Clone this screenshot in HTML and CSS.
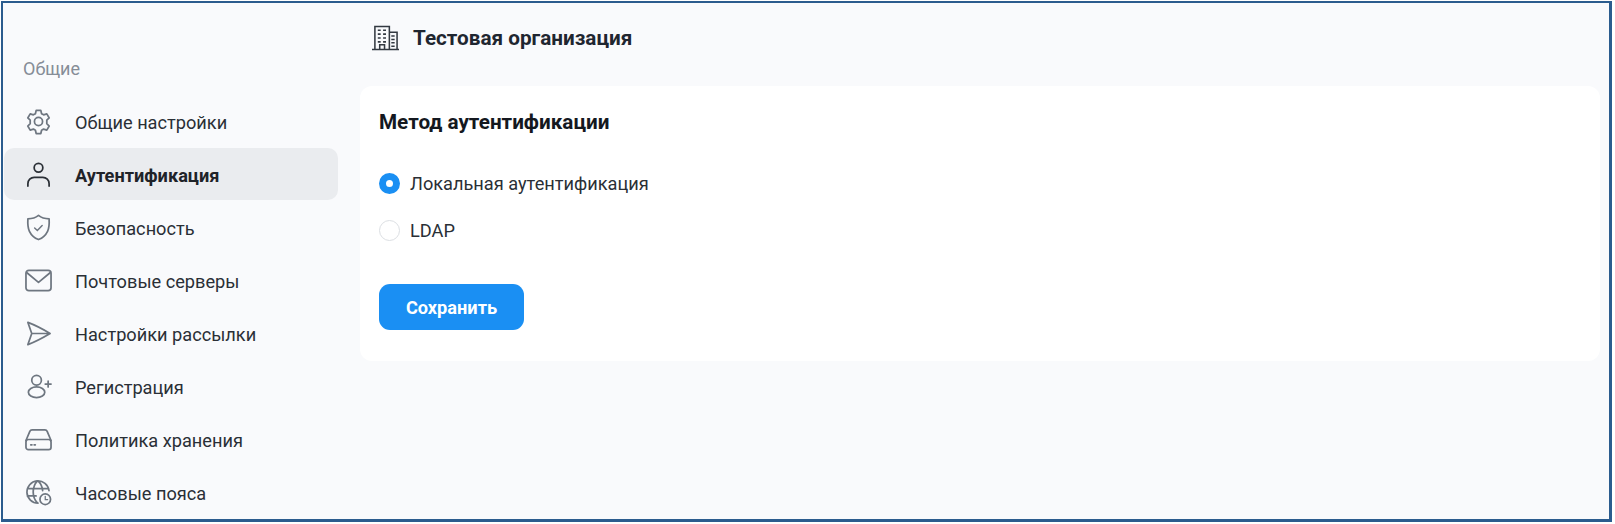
FILE: index.html
```html
<!DOCTYPE html>
<html lang="ru">
<head>
<meta charset="utf-8">
<title>Аутентификация</title>
<link rel="stylesheet" href="styles.css">
</head>
<body>
<div class="frame">
  <aside class="sidebar">
    <div class="group-label">Общие</div>
    <nav class="menu">
      <a class="item"><svg class="icon" viewBox="0 0 28 28"><path d="M11.6 2.500h4.800l.8 3.400 2.100 1.200 3.300-1 2.500 4.200-2.500 2.400v3.600l2.500 2.400-2.500 4.200-3.300-1-2.100 1.200-.8 3.400h-4.800l-.8-3.400-2.100-1.200-3.300 1-2.500-4.200 2.500-2.400v-3.600l-2.500-2.400 2.500-4.200 3.300 1 2.100-1.200z" stroke-linejoin="round"/><circle cx="14" cy="14" r="4.200"/></svg><span>Общие настройки</span></a>
      <a class="item active"><svg class="icon" viewBox="0 0 28 28"><circle cx="14" cy="7" r="4.500"/><path d="M3 26v-2.500a6.500 6.500 0 0 1 6.500-6.500h9a6.500 6.500 0 0 1 6.500 6.500V26"/></svg><span>Аутентификация</span></a>
      <a class="item"><svg class="icon" viewBox="0 0 28 28"><path d="M14 1.500c2.800 2.300 6.700 3.500 11 3.500.3 5 .3 9-1.600 13-1.800 3.800-5 6.800-9.400 8.500-4.400-1.700-7.600-4.700-9.400-8.500C2.700 14 2.700 10 3 5 7.300 5 11.200 3.800 14 1.500z" stroke-linejoin="round"/><path d="M10 14.500l2.800 2.700 5-5.200" stroke-width="1.500"/></svg><span>Безопасность</span></a>
      <a class="item"><svg class="icon" viewBox="0 0 28 28"><rect x="1" y="3.500" width="26" height="21" rx="3"/><path d="M2 6l12 10 12-10" stroke-linejoin="round"/></svg><span>Почтовые серверы</span></a>
      <a class="item"><svg class="icon" viewBox="0 0 28 28"><path d="M3 2.500c8 3 15.500 7 23 11.500-7.500 4.500-15 8.500-23 11.500L7 14zM7 14h19" stroke-linejoin="round"/></svg><span>Настройки рассылки</span></a>
      <a class="item"><svg class="icon" viewBox="0 0 28 28"><circle cx="12" cy="7.500" r="5"/><ellipse cx="12" cy="20" rx="8.500" ry="5.500"/><path d="M21 11.500h6M24 8.500v6"/></svg><span>Регистрация</span></a>
      <a class="item"><svg class="icon" viewBox="0 0 28 28"><path d="M1 15l4-9.500a2.500 2.500 0 0 1 2.300-1.500h13.400A2.500 2.500 0 0 1 23 5.500L27 15" stroke-linejoin="round"/><rect x="1" y="14" width="26" height="10.500" rx="2.500"/><path d="M6 19.500h1.200M9.500 19.500h1.200"/></svg><span>Политика хранения</span></a>
      <a class="item"><svg class="icon" viewBox="0 0 28 28"><path d="M13.500 25a11.500 11.500 0 1 1 11.400-13M2.500 10h22M2.500 17.500h9M13 2c-6 6-6 17 0 23M13.500 2c3 3 4.500 6.500 4.800 10"/><circle cx="21" cy="21" r="5.500"/><path d="M21 18v3.300h2.500" stroke-width="1.300"/></svg><span>Часовые пояса</span></a>
    </nav>
  </aside>
  <main class="content">
    <header class="org">
      <svg class="org-icon" viewBox="0 0 28 26"><path d="M0 25h28M3 25V1h15v24M18 7h8v18M8 25v-5h5v5M6 5h3M11.500 5h3M6 9h3M11.500 9h3M6 13h3M11.500 13h3M6 17h3M11.500 17h3M20 11h3.500M20 14.500h3.500M20 18h3.500M20 21.500h3.500"/></svg>
      <h1 class="org-name">Тестовая организация</h1>
    </header>
    <section class="card">
      <h2 class="card-title">Метод аутентификации</h2>
      <div class="radios">
        <label class="radio"><span class="dot checked"></span><span>Локальная аутентификация</span></label>
        <label class="radio"><span class="dot"></span><span>LDAP</span></label>
      </div>
      <button class="save">Сохранить</button>
    </section>
  </main>
</div>
</body>
</html>
```
FILE: styles.css
```css
* { box-sizing: border-box; }
html, body { margin: 0; height: 100%; background: #fff; }
body { padding: 1px 3px 2px 1px; font-family: Roboto, "Liberation Sans", sans-serif; color: #1f2329; overflow: hidden; }
.frame { display: flex; height: 521px; border: solid #2b5c8e; border-width: 2px 3px 3px 2px; background: #f9fafc; overflow: hidden; }
.sidebar { width: 336px; flex: none; padding: 54px 0 0 1px; }
.group-label { margin-left: 19px; font-size: 18px; line-height: 24px; color: #868d97; }
.menu { display: flex; flex-direction: column; margin-top: 14px; gap: 1px; }
.item { display: flex; align-items: center; height: 52px; width: 334px; border-radius: 10px; padding-left: 21px; font-size: 18.200px; color: #2a2f36; }
.item span { margin-left: 23px; position: relative; top: 1px; }
.item.active { background: #eaecef; font-weight: 700; color: #1f2329; }
.icon { width: 27px; height: 27px; flex: none; fill: none; stroke: #6e7680; stroke-width: 1.800; stroke-linecap: round; }
.active .icon { stroke: #2a2f36; }
.content { flex: 1; padding: 0 9px 0 21px; }
.org { display: flex; align-items: center; height: 83px; padding: 0 0 14px 12px; gap: 14px; }
.org-icon { width: 27px; height: 26px; fill: none; stroke: #333941; stroke-width: 1.600; }
.org-name { margin: 0; font-size: 20.700px; font-weight: 700; color: #1f2630; }
.card { background: #fff; border-radius: 12px; height: 275px; padding: 22px 19px; }
.card-title { margin: 0; font-size: 20.700px; line-height: 28px; font-weight: 700; color: #14181f; }
.radios { display: flex; flex-direction: column; gap: 21px; margin-top: 34px; }
.radio { display: flex; align-items: center; gap: 10px; height: 26px; font-size: 18.200px; color: #2a2f36; }
.dot { width: 21px; height: 21px; border-radius: 50%; border: 1.500px solid #dcdfe3; background: #fff; flex: none; }
.dot.checked { border: 7px solid #1a8ff3; }
.save { display: block; width: 145px; height: 46px; margin-top: 41px; border: 0; border-radius: 11px; background: #1a8ff3; color: #fff; font: 700 18.200px Roboto, "Liberation Sans", sans-serif; }
```
